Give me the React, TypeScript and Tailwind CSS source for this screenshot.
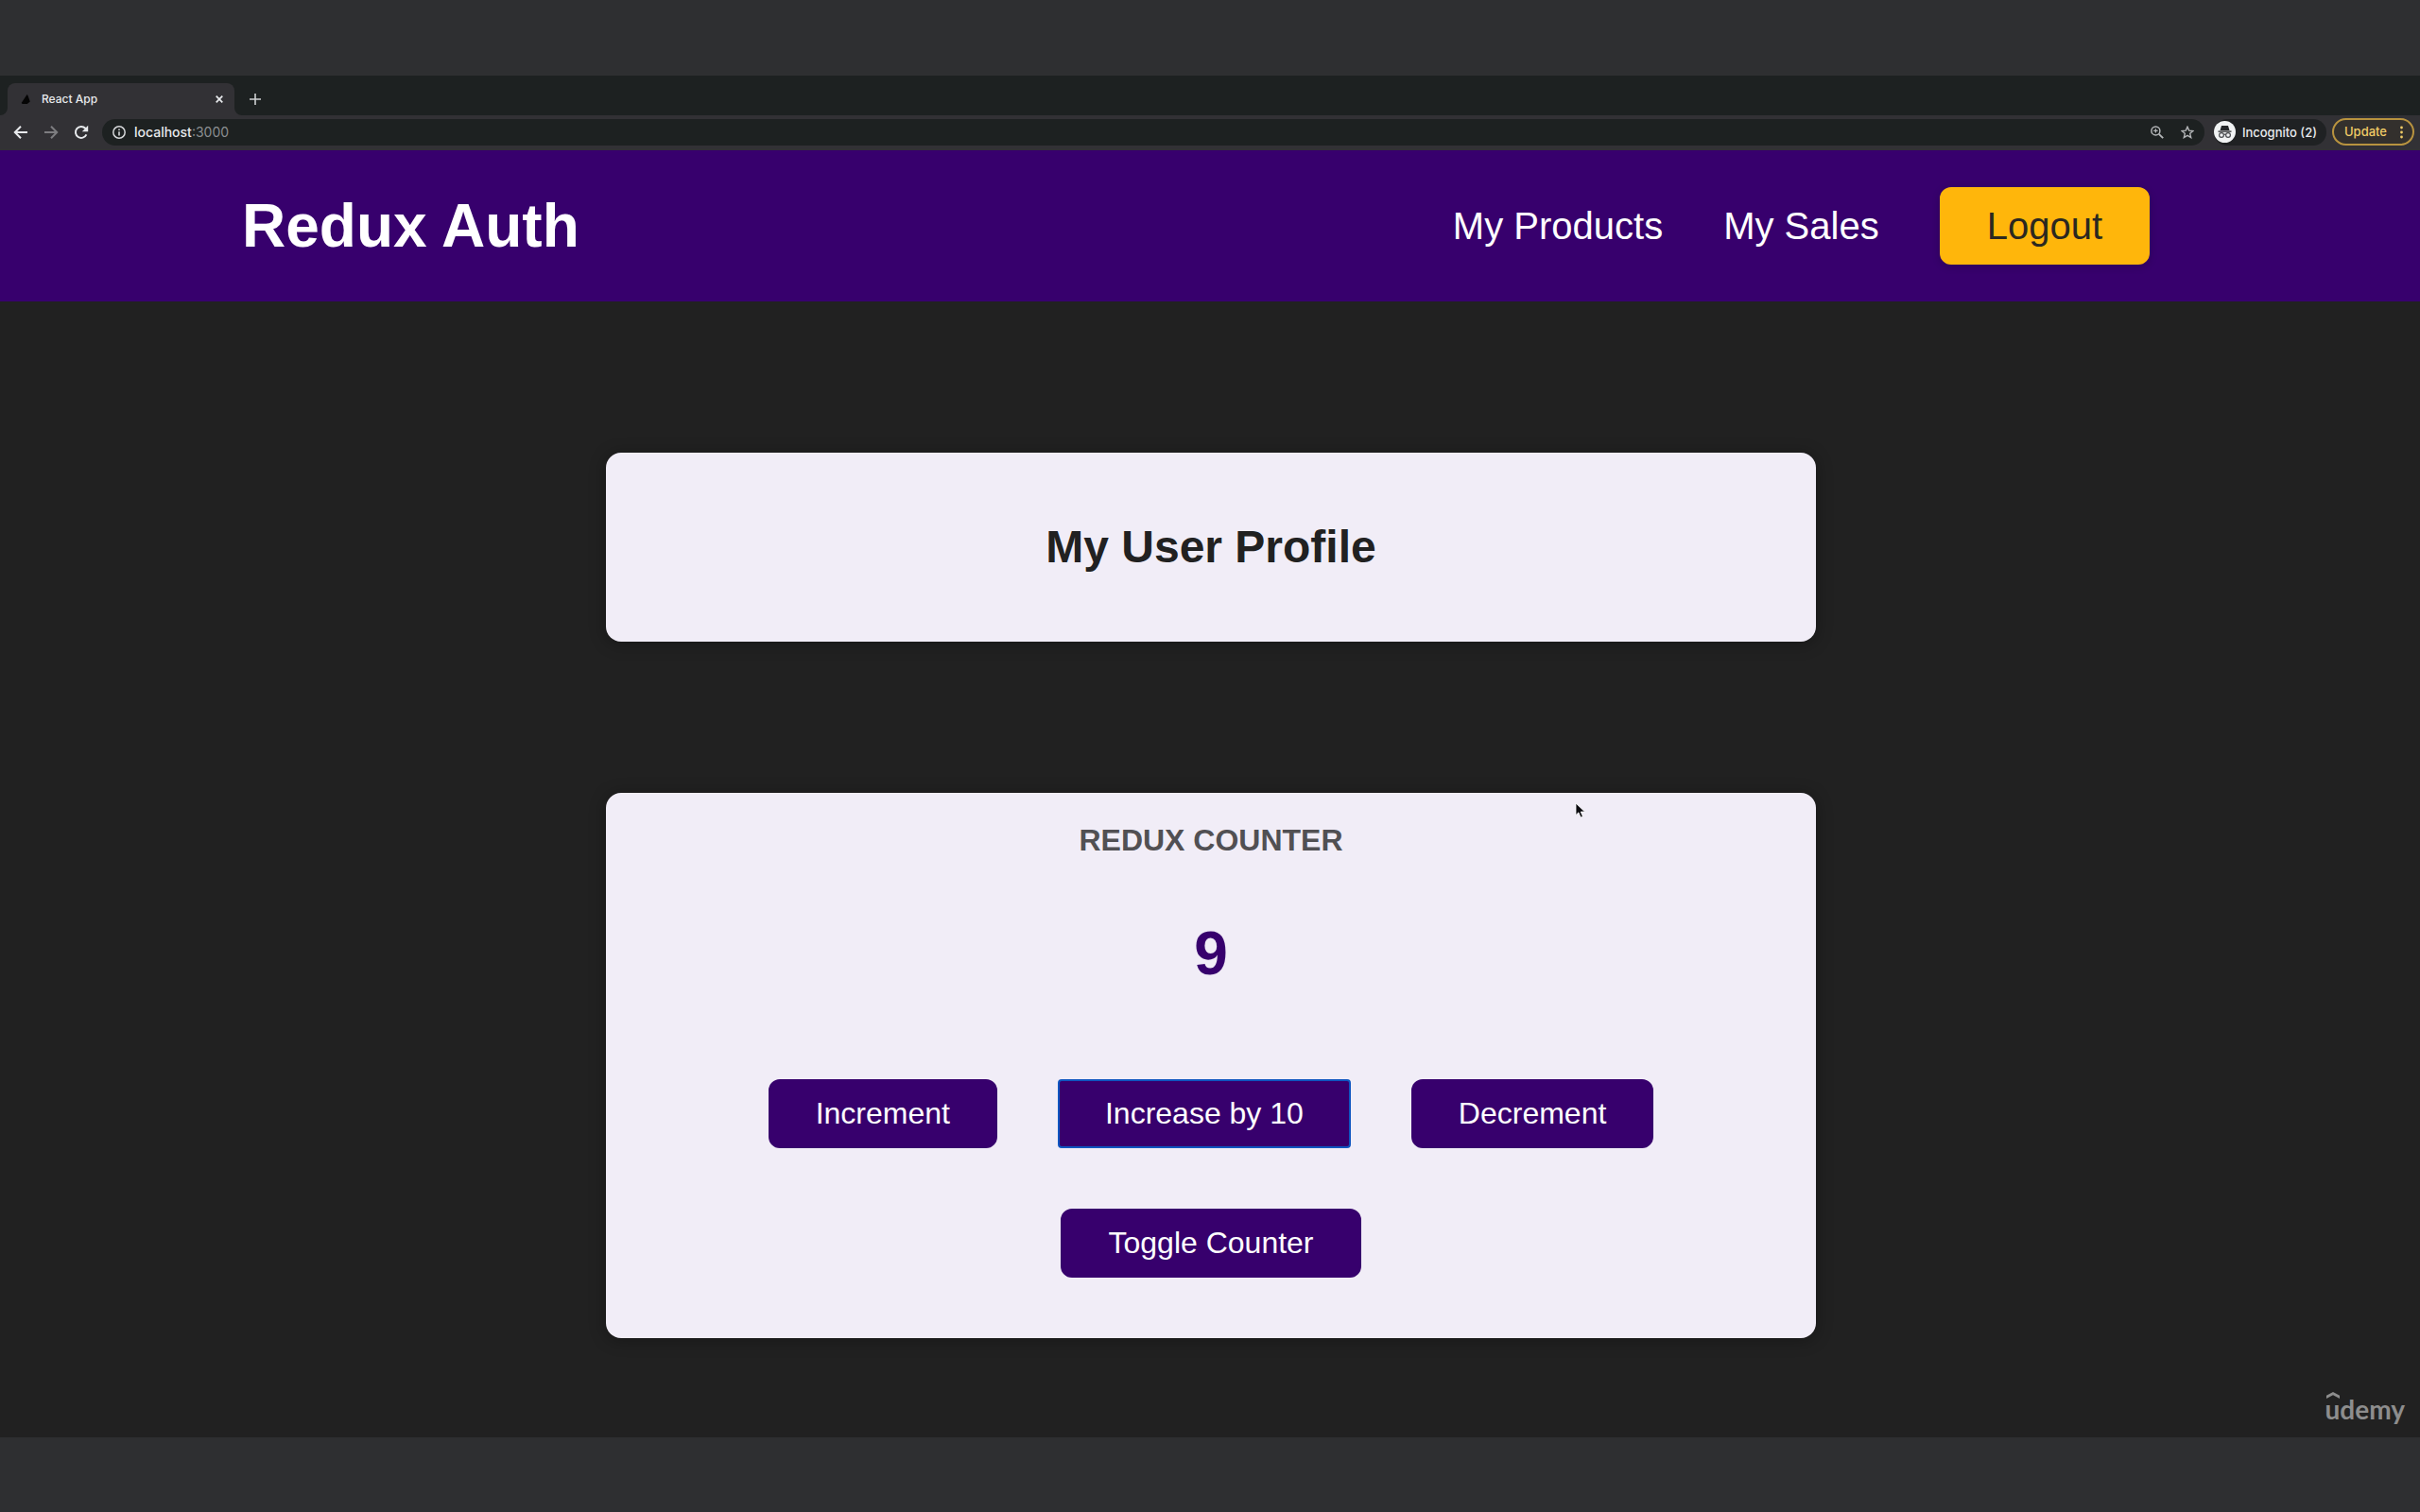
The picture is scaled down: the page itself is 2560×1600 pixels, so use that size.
import { useState } from "react";
import type { ReactNode } from "react";

function BrowserChrome() {
  return (
    <div className="bg-[#323135] font-['Inter','Liberation_Sans',sans-serif] text-[#e8eaed]">
      <div className="flex h-[42px] items-end bg-[#1d2121] pl-2">
        <div className="relative flex h-[34px] w-[240px] items-center rounded-t-lg bg-[#323135] pr-3 pl-[14px]">
          <svg className="absolute bottom-0 -left-2 size-2" viewBox="0 0 8 8" aria-hidden="true">
            <path d="M8 0v8H0a8 8 0 0 0 8-8z" fill="#323135" />
          </svg>
          <svg className="absolute -right-2 bottom-0 size-2" viewBox="0 0 8 8" aria-hidden="true">
            <path d="M0 0v8h8a8 8 0 0 1-8-8z" fill="#323135" />
          </svg>
          <svg className="size-[10px]" viewBox="0 0 10 10" aria-hidden="true">
            <path d="M6.600 0Q7.600.6 8 2.400L9.800 7.600 6.800 10H1.800L.6 9z" fill="#050505" />
          </svg>
          <span className="ml-3 flex-1 text-xs leading-4 font-medium">React App</span>
          <button type="button" aria-label="Close tab" className="flex">
            <svg className="size-2" viewBox="0 0 8 8" aria-hidden="true">
              <path d="M.7.7l6.6 6.6M7.3.7.7 7.3" stroke="#e8eaed" strokeWidth="1.7" />
            </svg>
          </button>
        </div>
        <button type="button" aria-label="New tab" className="mb-[11px] ml-4 flex">
          <svg className="size-3" viewBox="0 0 12 12" aria-hidden="true">
            <path d="M6 0v12M0 6h12" stroke="#cfd1d3" strokeWidth="1.6" />
          </svg>
        </button>
      </div>
      <div className="flex h-[37px] items-center pr-[6px] pb-[2px] pl-[14px]">
        <button type="button" aria-label="Back" className="flex">
          <svg className="size-4" viewBox="0 0 16 16" fill="none" stroke="#e8eaed" strokeWidth="2" aria-hidden="true">
            <path d="M15 8H2M8 1.8 1.8 8 8 14.2" />
          </svg>
        </button>
        <button type="button" aria-label="Forward" className="ml-4 flex">
          <svg className="size-4" viewBox="0 0 16 16" fill="none" stroke="#7d7d80" strokeWidth="2" aria-hidden="true">
            <path d="M1 8h13M8 1.8 14.2 8 8 14.2" />
          </svg>
        </button>
        <button type="button" aria-label="Reload" className="ml-4 flex">
          <svg className="size-4" viewBox="0 0 16 16" aria-hidden="true">
            <path d="M13.4 10.4A6 6 0 1 1 12.3 3.8l1.3 1.4" fill="none" stroke="#e8eaed" strokeWidth="2" />
            <path d="M15.2.8v6.4H8.8z" fill="#e8eaed" />
          </svg>
        </button>
        <div className="ml-[14px] flex h-7 flex-1 items-center rounded-full bg-[#1d2121] pr-[11px] pl-[11px]">
          <svg className="size-[14px]" viewBox="0 0 14 14" fill="none" aria-hidden="true">
            <circle cx="7" cy="7" r="6.2" stroke="#d5d7d9" strokeWidth="1.5" />
            <path d="M7 6.2v4.2M7 3.4v1.7" stroke="#d5d7d9" strokeWidth="1.6" />
          </svg>
          <span className="ml-[9px] flex-1 text-sm leading-5">
            <span className="font-medium">localhost</span>
            <span className="text-[#8b8e90]">:3000</span>
          </span>
          <button type="button" aria-label="Zoom" className="flex">
            <svg className="size-[14px]" viewBox="0 0 14 14" fill="none" stroke="#b4b6b8" aria-hidden="true">
              <circle cx="5.4" cy="5.4" r="4.5" strokeWidth="1.5" />
              <path d="M8.8 8.8l4.4 4.4" strokeWidth="1.9" />
              <path d="M5.4 3.2v4.4M3.2 5.4h4.4" strokeWidth="1.2" />
            </svg>
          </button>
          <button type="button" aria-label="Bookmark this page" className="ml-[18px] flex">
            <svg className="size-[14px]" viewBox="0 0 14 14" fill="none" stroke="#b4b6b8" strokeWidth="1.4" aria-hidden="true">
              <path d="M7 1.2l1.7 3.9 4.2.4-3.2 2.8 1 4.2L7 10.3l-3.7 2.2 1-4.2L1.1 5.5l4.2-.4z" />
            </svg>
          </button>
        </div>
        <div className="ml-[10px] flex h-7 items-center rounded-full bg-[#1f2123] pr-[10px]">
          <svg className="size-[23px]" viewBox="0 0 23 23" aria-hidden="true">
            <circle cx="11.5" cy="11.5" r="11.5" fill="#f1f3f4" />
            <path d="M8 5h7l1.500 5h-10zM4.500 10.400h14v1.300h-14z" fill="#26282b" />
            <circle cx="8" cy="15" r="2.4" fill="none" stroke="#4a4c50" strokeWidth="1.2" />
            <circle cx="15" cy="15" r="2.4" fill="none" stroke="#4a4c50" strokeWidth="1.2" />
            <path d="M10.4 14.600q1.100-.8 2.200 0" fill="none" stroke="#4a4c50" strokeWidth="1.2" />
          </svg>
          <span className="ml-[7px] text-[13px] leading-4 font-medium">Incognito (2)</span>
        </div>
        <button
          type="button"
          className="ml-[6px] flex h-[29px] items-center rounded-full border-2 border-[#b8933f] bg-[#33302d] pr-[10px] pl-[11px] text-[13px] font-medium text-[#f0cb66]"
        >
          Update
          <svg className="ml-[14px] h-[14px] w-[3px]" viewBox="0 0 3 14" fill="#f0cb66" aria-hidden="true">
            <circle cx="1.5" cy="2" r="1.4" />
            <circle cx="1.5" cy="7" r="1.4" />
            <circle cx="1.5" cy="12" r="1.4" />
          </svg>
        </button>
      </div>
    </div>
  );
}

function SiteHeader() {
  return (
    <header className="flex h-40 items-center justify-between bg-[#37006d] pr-[286px] pl-64 text-white">
      <h1 className="text-[64px] leading-[74px] font-bold">Redux Auth</h1>
      <nav>
        <ul className="flex items-center gap-16 text-[40px] leading-[46px]">
          <li>
            <a href="#products">My Products</a>
          </li>
          <li>
            <a href="#sales">My Sales</a>
          </li>
          <li>
            <button
              type="button"
              className="block rounded-xl border-2 border-[#ffb60b] bg-[#ffb60b] px-12 py-4 text-[#2b2820] shadow-[0_2px_8px_rgba(0,0,0,0.2)]"
            >
              Logout
            </button>
          </li>
        </ul>
      </nav>
    </header>
  );
}

function Card({ children }: { children: ReactNode }) {
  return (
    <section className="w-full max-w-[1280px] rounded-2xl bg-[#f1edf7] text-center shadow-[0_2px_16px_2px_rgba(0,0,0,0.25)]">
      {children}
    </section>
  );
}

function ActionButton({ children, onClick, autoFocus }: { children: ReactNode; onClick: () => void; autoFocus?: boolean }) {
  return (
    <button
      type="button"
      onClick={onClick}
      autoFocus={autoFocus}
      className="rounded-xl border-2 border-[#37006d] bg-[#37006d] px-12 py-4 text-[32px] leading-[37px] text-white outline-none focus:rounded-sm focus:border-[#0f56c0]"
    >
      {children}
    </button>
  );
}

function Counter() {
  const [count, setCount] = useState(9);
  const [visible, setVisible] = useState(true);
  return (
    <Card>
      <div className="flex flex-col items-center pt-8 pb-16">
        <h2 className="text-[32px] leading-[37px] font-bold text-[#515053]">REDUX COUNTER</h2>
        <div className="my-16 text-[64px] leading-[74px] font-bold text-[#37006d]">{visible ? count : ""}</div>
        <div className="mt-8 flex gap-16">
          <ActionButton onClick={() => setCount(count + 1)}>Increment</ActionButton>
          <ActionButton onClick={() => setCount(count + 10)} autoFocus>
            Increase by 10
          </ActionButton>
          <ActionButton onClick={() => setCount(count - 1)}>Decrement</ActionButton>
        </div>
        <div className="mt-16">
          <ActionButton onClick={() => setVisible(!visible)}>Toggle Counter</ActionButton>
        </div>
      </div>
    </Card>
  );
}

function Watermark() {
  return (
    <div className="absolute right-4 bottom-3 font-['Lato','Liberation_Sans',sans-serif] text-[28px] leading-9 font-bold text-[#8d8d8d]">
      <svg className="absolute top-0 left-px h-[7px] w-[14px]" viewBox="0 0 14 7" aria-hidden="true">
        <path d="M0 3.800 7 0l7 3.800V7L7 3.200 0 7z" fill="#8d8d8d" />
      </svg>
      udemy
    </div>
  );
}

function Pointer() {
  return (
    <svg className="absolute top-[690px] left-[1666px] h-[18px] w-3" viewBox="0 0 12 18" aria-hidden="true">
      <path d="M1 1v12.500l2.900-2.700 2.200 5.200 2.300-1-2.200-5h4.300z" fill="#0b0b0f" stroke="#ffffff" strokeWidth=".8" />
    </svg>
  );
}

export default function App() {
  return (
    <div className="flex min-h-screen flex-col bg-[#2e2f31]">
      <div className="h-20" />
      <BrowserChrome />
      <div className="relative flex flex-1 flex-col bg-[#212121] font-['Liberation_Sans',Arial,sans-serif]">
        <SiteHeader />
        <main className="flex flex-1 flex-col items-center gap-40 pt-40 pr-16 pb-20 pl-[66px]">
          <Card>
            <h2 className="py-[72px] text-5xl leading-[56px] font-bold text-[#212121]">My User Profile</h2>
          </Card>
          <Counter />
        </main>
        <Pointer />
        <Watermark />
      </div>
      <div className="h-[79px]" />
    </div>
  );
}
